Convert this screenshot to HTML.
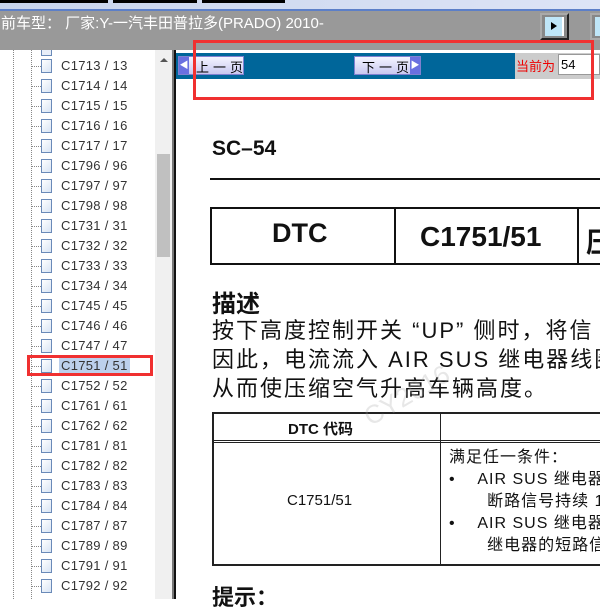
<!DOCTYPE html>
<html><head><meta charset="utf-8"><style>
*{margin:0;padding:0;box-sizing:border-box}
body{width:600px;height:599px;overflow:hidden;position:relative;background:#fff;font-family:"Liberation Sans","Noto Sans CJK SC",sans-serif}
.a{position:absolute}
.row{position:absolute;left:0;width:155px;height:20px}
.row .h{position:absolute;left:31px;top:10px;width:10px;border-top:1px dotted #888}
.row .ic{position:absolute;left:41px;top:3px;width:11px;height:14px;border:1px solid #6a8ab8;background:linear-gradient(135deg,#fff,#d8e4f4)}
.row .t{position:absolute;left:61px;top:2px;font-size:13px;color:#333;letter-spacing:0.3px}
</style></head><body>
<div class="a" style="left:0;top:0;width:600px;height:10px;background:linear-gradient(90deg,#c8d4ec,#dde4f6)"></div>
<div class="a" style="left:0;top:0;width:108px;height:3px;background:#000"></div>
<div class="a" style="left:113px;top:0;width:84px;height:3px;background:#000"></div>
<div class="a" style="left:202px;top:0;width:83px;height:3px;background:#000"></div>
<div class="a" style="left:0;top:9px;width:600px;height:2px;background:#5c7fc8"></div>
<div class="a" style="left:0;top:11px;width:600px;height:39px;background:#999"></div>
<div class="a" style="left:1px;top:12px;font-size:15px;color:#fff;white-space:nowrap">前车型： 厂家:Y-一汽丰田普拉多(PRADO) 2010-</div>
<div class="a" style="left:540px;top:13px;width:29px;height:27px;background:#888;border:2px solid #aaa;border-right-color:#222;border-bottom-color:#222"></div>
<div class="a" style="left:545px;top:17px;width:19px;height:19px;background:#bfe6f8;border-right:2px solid #fff"></div>
<div class="a" style="left:551px;top:22px;width:0;height:0;border-top:4px solid transparent;border-bottom:4px solid transparent;border-left:6px solid #000"></div>
<div class="a" style="left:590px;top:13px;width:12px;height:27px;background:#888;border:2px solid #aaa;border-right:0"></div>
<div class="a" style="left:595px;top:17px;width:8px;height:19px;background:#bfe6f8"></div>
<div class="a" style="left:13px;top:50px;height:549px;border-left:1px dotted #888"></div>
<div class="a" style="left:31px;top:50px;height:549px;border-left:1px dotted #888"></div>
<div class="a" style="left:41px;top:50px;width:11px;height:6px;border:1px solid #6a8ab8;border-top:0;background:#e8eef8"></div>
<div class="a" style="left:59px;top:357px;width:71px;height:17px;background:#bcd0ec"></div>
<div id="tree"></div>
<div class="a" style="left:155px;top:50px;width:17px;height:549px;background:#f0f0f0"></div>
<div class="a" style="left:160px;top:58px;width:0;height:0;border-left:4px solid transparent;border-right:4px solid transparent;border-bottom:4px solid #555"></div>
<div class="a" style="left:157px;top:154px;width:13px;height:103px;background:#c0c0c0"></div>
<div class="a" style="left:172px;top:50px;width:2px;height:549px;background:#777"></div>
<div class="a" style="left:174px;top:50px;width:2px;height:549px;background:#111"></div>
<div class="a" style="left:176px;top:53px;width:339px;height:26px;background:#00669a"></div>
<div class="a" style="left:515px;top:53px;width:85px;height:26px;background:#cccccc"></div>
<div class="a" style="left:176px;top:50px;width:424px;height:3px;background:#fff"></div>
<div class="a" style="left:178px;top:56px;width:66px;height:19px;background:linear-gradient(#f4f4ff,#c8c8f0);border:1px solid #8080d0"></div>
<div class="a" style="left:179px;top:57px;width:10px;height:17px;background:#6a70e0;color:#fff;font-size:9px;line-height:17px;text-align:center">◀</div>
<div class="a" style="left:196px;top:57px;font-size:13px;color:#000;letter-spacing:4px;white-space:nowrap">上一页</div>
<div class="a" style="left:354px;top:56px;width:67px;height:19px;background:linear-gradient(#f4f4ff,#c8c8f0);border:1px solid #8080d0"></div>
<div class="a" style="left:410px;top:57px;width:10px;height:17px;background:#6a70e0;color:#fff;font-size:9px;line-height:17px;text-align:center">▶</div>
<div class="a" style="left:362px;top:57px;font-size:13px;color:#000;letter-spacing:4px;white-space:nowrap">下一页</div>
<div class="a" style="left:516px;top:56px;font-size:13px;color:#e00">当前为</div>
<div class="a" style="left:558px;top:54px;width:42px;height:21px;background:#fff;border:1px solid #999;font-size:13px;padding:2px 2px;color:#000">54</div>
<div class="a" style="left:212px;top:137px;font-size:21px;font-weight:bold;color:#111">SC–54</div>
<div class="a" style="left:210px;top:178px;width:390px;height:2px;background:#111"></div>
<div class="a" style="left:210px;top:207px;width:400px;height:58px;border:2px solid #111"></div>
<div class="a" style="left:394px;top:207px;width:2px;height:58px;background:#111"></div>
<div class="a" style="left:577px;top:207px;width:2px;height:58px;background:#111"></div>
<div class="a" style="left:272px;top:218px;font-size:27px;font-weight:bold;color:#111">DTC</div>
<div class="a" style="left:420px;top:221px;font-size:28px;font-weight:bold;color:#111">C1751/51</div>
<div class="a" style="left:586px;top:221px;font-size:28px;font-weight:bold;color:#111">压</div>
<div class="a" style="left:212px;top:284px;font-size:24px;font-weight:bold;color:#111">描述</div>
<div class="a" style="left:212px;top:316px;font-size:22px;line-height:29px;color:#111;white-space:nowrap;letter-spacing:2px">按下高度控制开关 “UP” 侧时，将信<br>因此，电流流入 AIR SUS 继电器线圈<br>从而使压缩空气升高车辆高度。</div>
<div class="a" style="left:212px;top:412px;width:400px;height:154px;border:2px solid #222"></div>
<div class="a" style="left:212px;top:440px;width:390px;height:3px;border-top:1px solid #222;border-bottom:1px solid #222"></div>
<div class="a" style="left:440px;top:412px;width:1px;height:154px;background:#222"></div>
<div class="a" style="left:288px;top:418px;font-size:15px;font-weight:bold;color:#111">DTC 代码</div>
<div class="a" style="left:287px;top:492px;font-size:15px;color:#111">C1751/51</div>
<div class="a" style="left:449px;top:447px;font-size:16px;line-height:22px;color:#111;white-space:nowrap;letter-spacing:1px">满足任一条件：<br>•&nbsp;&nbsp;&nbsp;&nbsp;AIR SUS 继电器<br>&nbsp;&nbsp;&nbsp;&nbsp;&nbsp;&nbsp;&nbsp;断路信号持续 1<br>•&nbsp;&nbsp;&nbsp;&nbsp;AIR SUS 继电器<br>&nbsp;&nbsp;&nbsp;&nbsp;&nbsp;&nbsp;&nbsp;继电器的短路信</div>
<div class="a" style="left:212px;top:580px;font-size:22px;font-weight:bold;color:#111">提示：</div>
<div class="a" style="left:360px;top:380px;font-size:26px;color:rgba(160,160,160,0.25);transform:rotate(-30deg)">CY2016</div>
<div class="a" style="left:193px;top:40px;width:401px;height:60px;border:3px solid #f03030"></div>
<div class="a" style="left:27px;top:355px;width:126px;height:21px;border:3px solid #f03030"></div>
<script>
var L=["C1713 / 13","C1714 / 14","C1715 / 15","C1716 / 16","C1717 / 17","C1796 / 96","C1797 / 97","C1798 / 98","C1731 / 31","C1732 / 32","C1733 / 33","C1734 / 34","C1745 / 45","C1746 / 46","C1747 / 47","C1751 / 51","C1752 / 52","C1761 / 61","C1762 / 62","C1781 / 81","C1782 / 82","C1783 / 83","C1784 / 84","C1787 / 87","C1789 / 89","C1791 / 91","C1792 / 92"];
var h="";for(var i=0;i<L.length;i++){h+='<div class="row" style="top:'+(56+i*20)+'px"><div class="h"></div><div class="ic"></div><div class="t">'+L[i]+'</div></div>';}
document.getElementById("tree").innerHTML=h;
</script>
</body></html>
